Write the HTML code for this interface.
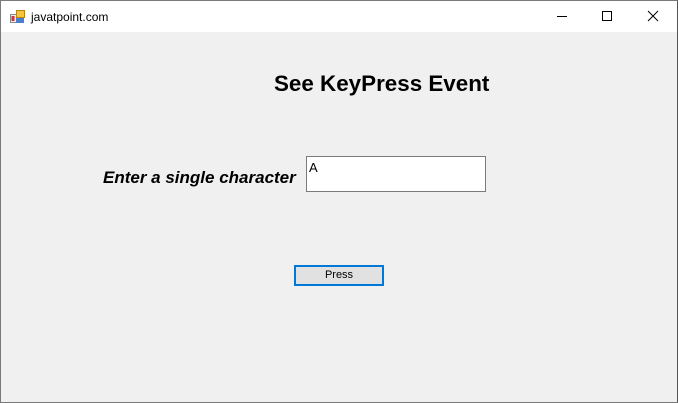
<!DOCTYPE html>
<html><head><style>
html,body{margin:0;padding:0;width:678px;height:403px;overflow:hidden;background:#f0f0f0;font-family:"Liberation Sans",sans-serif}
.win{position:absolute;left:0;top:0;width:676px;height:401px;border:1px solid #7a7a7a;border-right-color:#555;background:#f0f0f0}
.tb{position:absolute;left:0;top:0;width:676px;height:31px;background:#fff}
.title{position:absolute;left:30px;top:9px;font-size:12px;color:#000}
.h{position:absolute;left:273px;top:70px;font-size:22.4px;font-weight:bold;color:#000}
.lbl{position:absolute;left:102px;top:167px;font-size:17px;font-weight:bold;font-style:italic;color:#000}
.tbx{position:absolute;left:305px;top:155px;width:178px;height:34px;background:#fff;border:1px solid #7a7a7a}
.tbx span{position:absolute;left:2px;top:3px;font-size:13px}
.btn{position:absolute;left:293px;top:264px;width:86px;height:17px;background:#e1e1e1;border:2px solid #0078d7;font-size:11px;text-align:center;line-height:17px;color:#000}
</style></head><body>
<div class="win">
<div class="tb">
<svg style="position:absolute;left:9px;top:8px" width="16" height="16" viewBox="0 0 16 16">
<rect x="0.5" y="5.5" width="8" height="8" fill="#eee" stroke="#888"/>
<rect x="1.5" y="7" width="3" height="5" fill="#c33"/>
<rect x="6.5" y="1.5" width="8" height="7" fill="#f5c242" stroke="#b8860b"/>
<rect x="6" y="9" width="8" height="5" fill="#4a7fd0"/>
</svg>
<div class="title">javatpoint.com</div>
<svg style="position:absolute;left:550px;top:8px" width="120" height="16">
<line x1="6" y1="7.5" x2="16" y2="7.5" stroke="#000"/>
<rect x="51.5" y="2.5" width="9" height="9" fill="none" stroke="#000"/>
<path d="M97 2 L107 12 M107 2 L97 12" stroke="#000"/>
</svg>
</div>
<div class="h">See KeyPress Event</div>
<div class="lbl">Enter a single character</div>
<div class="tbx"><span>A</span></div>
<div class="btn">Press</div>
</div>
</body></html>
